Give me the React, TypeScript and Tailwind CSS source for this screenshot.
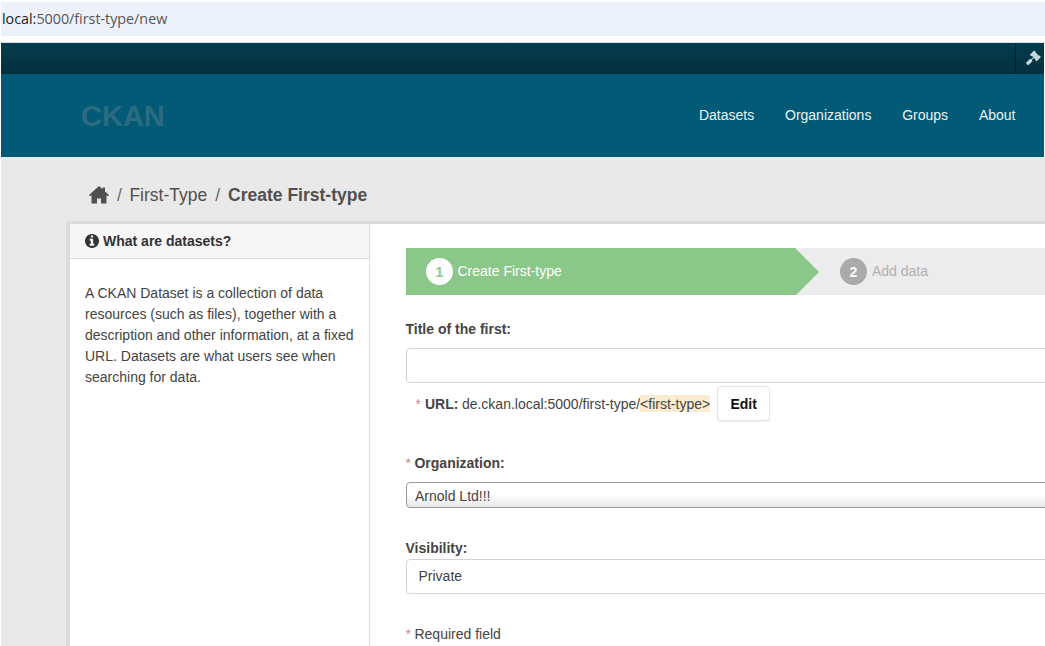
const navLinks = ['Datasets', 'Organizations', 'Groups', 'About'];

const Req = () => <span className="font-normal text-[#c6898b]">*</span>;

const HomeIcon = () => (
  <svg viewBox="0 0 20 18" className="w-[20px] h-[18px] mt-[2px] ml-[1px] fill-[#505050] shrink-0">
    <path d="M10 0L13.500 3V1.500H16V5.500L20 9L19 10.300L17.500 9.200V17.500H12V12.500H8V17.500H2.500V9.200L1 10.300L0 9Z" />
  </svg>
);

const GavelIcon = () => (
  <svg viewBox="0 0 1792 1792" className="w-[15px] h-[15px] fill-[#c6d7db] -scale-x-100">
    <path d="M1771 1440q0 53-37 90l-107 108q-39 37-91 37-53 0-90-37l-363-364q-38-36-38-90 0-53 43-96l-256-256-126 126q-14 14-34 14t-34-14q2 2 12.5 12t12.5 13 10 11.5 10 13.5 6 13.5 5.5 16.5 1.5 18q0 38-28 68-3 3-16.5 18t-19 20.5-18.5 16.5-22 15.5-22 9-26 4.5q-40 0-68-28l-408-408q-28-28-28-68 0-13 4.5-26t9-22 15.5-22 16.5-18.5 20.5-19 18-16.5q30-28 68-28 10 0 18 1.5t16.5 5.5 13.5 6 13.5 10 11.5 10 13 12.5 12 12.5q-14-14-14-34t14-34l348-348q14-14 34-14t34 14q-2-2-12.5-12t-12.5-13-10-11.5-10-13.5-6-13.5-5.5-16.5-1.5-18q0-38 28-68 3-3 16.5-18t19-20.5 18.5-16.5 22-15.5 22-9 26-4.5q40 0 68 28l408 408q28 28 28 68 0 13-4.5 26t-9 22-15.5 22-16.5 18.5-20.5 19-18 16.5q-30 28-68 28-10 0-18-1.5t-16.5-5.5-13.5-6-13.5-10-11.5-10-13-12.5-12-12.5q14 14 14 34t-14 34l-126 126 256 256q43-43 96-43 52 0 91 37l363 363q37 39 37 91z" />
  </svg>
);

const InfoIcon = () => (
  <svg viewBox="0 0 1536 1536" className="w-[14px] h-[14px] fill-[#333333] shrink-0">
    <path d="M1024 1248v-160q0-14-9-23t-23-9h-96v-512q0-14-9-23t-23-9h-320q-14 0-23 9t-9 23v160q0 14 9 23t23 9h96v320h-96q-14 0-23 9t-9 23v160q0 14 9 23t23 9h448q14 0 23-9t9-23zm-128-896v-160q0-14-9-23t-23-9h-192q-14 0-23 9t-9 23v160q0 14 9 23t23 9h192q14 0 23-9t9-23zm640 416q0 209-103 385.500t-279.500 279.500-385.500 103-385.500-103-279.500-279.500-103-385.500 103-385.500 279.500-279.500 385.500-103 385.500 103 279.500 279.500 103 385.500z" />
  </svg>
);

export default function App() {
  return (
    <div className="w-[1045px] h-[646px] overflow-hidden bg-white font-['Liberation_Sans',Arial,sans-serif] text-[14px] leading-[20px] text-[#444444]">
      {/* address bar */}
      <div className="mt-[2px] ml-px h-[34px] bg-[#edf1fa] pl-px flex items-center font-['Open_Sans',sans-serif] text-[14.3px] text-[#555555]">
        <span className="text-[#222222]">local:</span>5000/first-type/new
      </div>

      <div className="mt-[6px] ml-px">
        {/* account bar */}
        <div className="mr-px h-[32px] border-t border-[#dddddd] bg-gradient-to-b from-[#053c4d] to-[#03303f] flex justify-end">
          <div className="w-[29px] border-l border-[#02232e] pl-[10px] flex items-center">
            <GavelIcon />
          </div>
        </div>

        {/* masthead */}
        <div className="mr-px h-[83px] bg-[#025a77] flex items-center justify-between pl-[80px] pr-[28.5px]">
          <div className="text-[29px] font-bold leading-none text-[#2b6c82] mt-[1px]">CKAN</div>
          <nav className="flex gap-[30.8px] text-[#eaf2f4] mb-[2px]">
            {navLinks.map((link) => (
              <span key={link}>{link}</span>
            ))}
          </nav>
        </div>

        {/* main */}
        <div className="h-[489px] bg-[#e9e9e9] overflow-hidden">
          <div className="h-[64px] pl-[87px] pt-[27px] flex items-start text-[17.5px] leading-[22px] text-[#505050]">
            <HomeIcon />
            <span className="ml-[8px] mr-[7.5px] text-[#6b6b6b]">/</span>
            <span>First-Type</span>
            <span className="ml-[8px] mr-[8px] text-[#6b6b6b]">/</span>
            <span className="font-bold">Create First-type</span>
          </div>

          <div className="ml-[65px] w-[1100px] rounded-[4px] border-[4px] border-[#dcdcdc] border-b-0 border-t-[3px] h-[430px] bg-white flex">
            {/* sidebar */}
            <aside className="w-[300px] shrink-0 border-r border-[#dddddd]">
              <div className="h-[35px] bg-[#f6f6f6] border-b border-[#dddddd] pl-[15px] flex items-center gap-[4px] font-bold text-[#333333]">
                <InfoIcon />
                What are datasets?
              </div>
              <p className="pl-[15px] pr-[14px] pt-[24px] leading-[21px] text-[#444444]">
                A CKAN Dataset is a collection of data resources (such as files), together with a description and other information, at a fixed URL. Datasets are what users see when searching for data.
              </p>
            </aside>

            {/* form */}
            <div className="flex-1 pl-[36px] pt-[24px]">
              <div className="h-[47px] bg-[#ececec] flex items-center">
                <div className="w-[390px] h-full bg-[#8cc78a] pl-[20px] flex items-center gap-[5px] text-white">
                  <span className="w-[27px] h-[27px] rounded-full bg-white text-[#8cc78a] font-bold flex items-center justify-center">1</span>
                  <span className="mb-[2px] -ml-[0.5px]">Create First-type</span>
                </div>
                <div className="w-0 h-0 border-y-[23.5px] border-y-transparent border-l-[23px] border-l-[#8cc78a]" />
                <div className="ml-[21px] flex items-center gap-[5px] text-[#b0b0b0]">
                  <span className="w-[27px] h-[27px] rounded-full bg-[#aaaaaa] text-white font-bold flex items-center justify-center">2</span>
                  <span className="mb-[2px]">Add data</span>
                </div>
              </div>

              <div className="mt-[24px] -ml-[0.5px] font-bold">Title of the first:</div>
              <div className="mt-[9px] h-[35px] rounded-[4px] border border-[#ced4de] bg-white" />

              <div className="mt-[3px] pl-[9.5px] flex items-center">
                <Req />
                <span className="ml-[4px] font-bold">URL:</span>
                <span className="ml-[3.5px]">de.ckan.local:5000/first-type/</span>
                <span className="bg-[#faebd0] h-[17px] flex items-center">&lt;first-type&gt;</span>
                <button className="ml-[7px] h-[35px] w-[53px] rounded-[4px] border border-[#e4e4e4] bg-white font-bold text-[#111111] shadow-[0_1px_1px_rgba(0,0,0,0.08)]">
                  Edit
                </button>
              </div>

              <div className="mt-[32px] -ml-[0.5px] font-bold">
                <Req /><span className="ml-[3.5px]">Organization:</span>
              </div>
              <div className="mt-[9px] h-[26px] rounded-[4px] border border-[#9a9a9a] bg-gradient-to-b from-white from-50% to-[#e6e6e6] pl-[8px] pt-[2px] flex items-center text-[#444444]">
                Arnold Ltd!!!
              </div>

              <div className="mt-[30px] -ml-[0.5px] font-bold">Visibility:</div>
              <div className="mt-px h-[35px] rounded-[4px] border border-[#ced4de] bg-white pl-[11.5px] pb-[2px] flex items-center">
                Private
              </div>

              <div className="mt-[30px] -ml-[0.5px]">
                <Req /><span className="ml-[3.5px]">Required field</span>
              </div>
            </div>
          </div>
        </div>
      </div>
    </div>
  );
}
